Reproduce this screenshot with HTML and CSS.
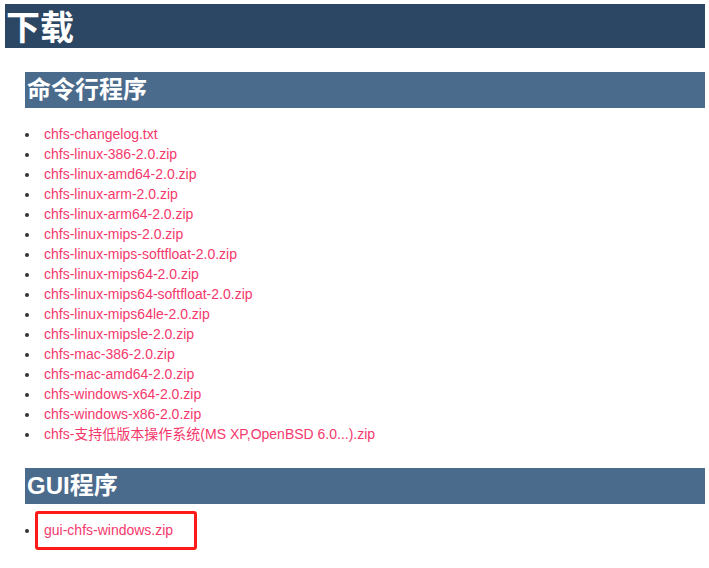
FILE: index.html
```html
<!DOCTYPE html>
<html lang="zh-CN">
<head>
    <meta charset="UTF-8">
    <meta name="viewport" content="width=device-width, initial-scale=1.0">
    <title>下载</title>
    <link rel="stylesheet" href="styles.css">
</head>
<body>
    <h1 class="page-title">下载</h1>

    <!-- 命令行程序 -->
    <div class="section">
        <h2 class="section-title">命令行程序</h2>
        <ul class="file-list">
            <li><a href="#">chfs-changelog.txt</a></li>
            <li><a href="#">chfs-linux-386-2.0.zip</a></li>
            <li><a href="#">chfs-linux-amd64-2.0.zip</a></li>
            <li><a href="#">chfs-linux-arm-2.0.zip</a></li>
            <li><a href="#">chfs-linux-arm64-2.0.zip</a></li>
            <li><a href="#">chfs-linux-mips-2.0.zip</a></li>
            <li><a href="#">chfs-linux-mips-softfloat-2.0.zip</a></li>
            <li><a href="#">chfs-linux-mips64-2.0.zip</a></li>
            <li><a href="#">chfs-linux-mips64-softfloat-2.0.zip</a></li>
            <li><a href="#">chfs-linux-mips64le-2.0.zip</a></li>
            <li><a href="#">chfs-linux-mipsle-2.0.zip</a></li>
            <li><a href="#">chfs-mac-386-2.0.zip</a></li>
            <li><a href="#">chfs-mac-amd64-2.0.zip</a></li>
            <li><a href="#">chfs-windows-x64-2.0.zip</a></li>
            <li><a href="#">chfs-windows-x86-2.0.zip</a></li>
            <li><a href="#">chfs-支持低版本操作系统(MS XP,OpenBSD 6.0...).zip</a></li>
        </ul>
    </div>

    <!-- GUI程序 -->
    <div class="section">
        <h2 class="section-title">GUI程序</h2>
        <ul class="file-list">
            <li><span class="marked"><a href="#">gui-chfs-windows.zip</a></span></li>
        </ul>
    </div>
</body>
</html>
```

FILE: styles.css
```css
* {
    box-sizing: border-box;
    margin: 0;
    padding: 0;
}

body {
    padding: 4px 4px 28px 5px;
    font-family: 'Liberation Sans', 'Noto Sans CJK SC', sans-serif;
    font-size: 14px;
    color: #333;
    background: #fff;
}

/* Headings */
.page-title {
    background: #2c4763;
    color: #fff;
    font-family: 'Noto Sans CJK SC', sans-serif;
    font-size: 34px;
    font-weight: bold;
    line-height: 44px;
    height: 44px;
    padding-left: 1px;
}

.section {
    padding-left: 20px;
    margin-top: 24px;
}

.section-title {
    background: #4b6b8d;
    color: #fff;
    font-family: 'Liberation Sans', 'Noto Sans CJK SC', sans-serif;
    font-size: 24px;
    font-weight: bold;
    line-height: 36px;
    height: 36px;
    padding-left: 2px;
}

/* File lists */
.file-list {
    margin-top: 16px;
    padding-left: 15px;
    list-style: disc;
}

.file-list li {
    line-height: 20px;
    padding-left: 4px;
}

.file-list a {
    color: #f5386c;
    text-decoration: none;
}

/* highlight box */
.marked {
    display: inline-block;
    vertical-align: top;
    border: 3px solid #ff1a1a;
    border-radius: 3px;
    padding: 6px 21px 7px 6px;
    margin: -9px 0 -10px -9px;
}
```
